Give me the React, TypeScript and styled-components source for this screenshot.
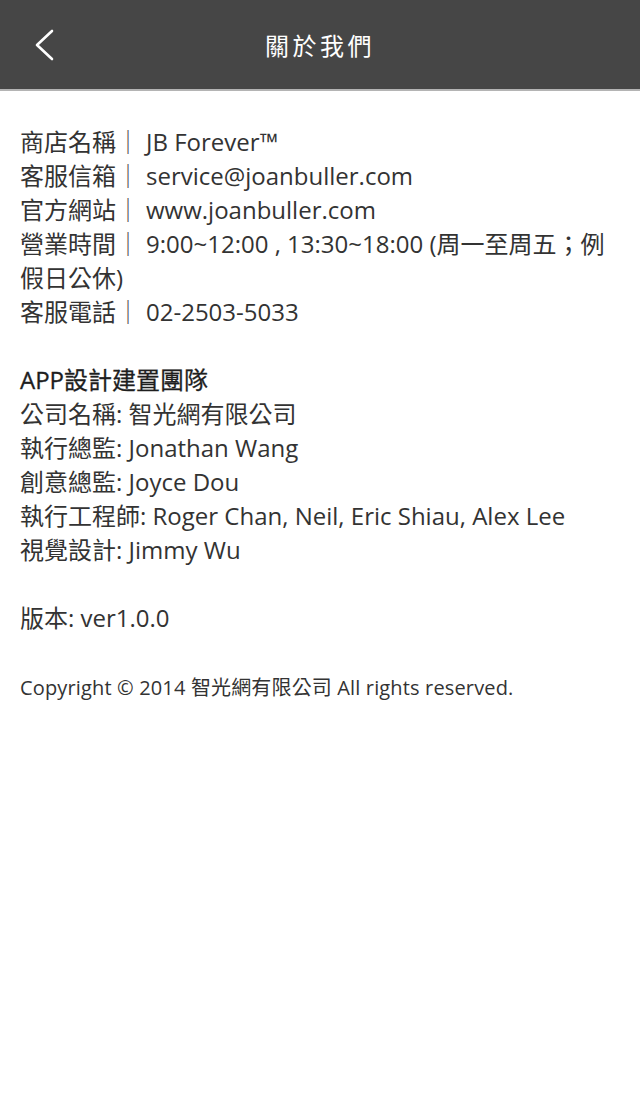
import styled, { createGlobalStyle } from "styled-components";

const GlobalStyle = createGlobalStyle`
	html, body {
		margin: 0;
		padding: 0;
		background: #fff;
	}
	body {
		font-family: "Open Sans", "Noto Sans CJK TC", sans-serif;
		color: #333;
	}
`;

const Page = styled.div`
	width: 640px;
	min-height: 1118px;
	background: #fff;
`;

const Header = styled.header`
	position: relative;
	height: 89px;
	background: #464646;
	border-bottom: 2px solid #b4b4b4;
	display: flex;
	align-items: center;
	justify-content: center;
`;

const BackButton = styled.button`
	position: absolute;
	left: 34px;
	top: 29px;
	width: 20px;
	height: 32px;
	padding: 0;
	border: none;
	background: none;
	display: block;
	cursor: pointer;
`;

const Title = styled.h1`
	margin: 0;
	font-family: "Noto Sans CJK TC", sans-serif;
	font-size: 24px;
	font-weight: 400;
	letter-spacing: 3.5px;
	color: #fff;
`;

const Content = styled.main`
	padding: 34px 20px 0;
	font-size: 24px;
	line-height: 34px;
`;

const Block = styled.section`
	margin-bottom: 34px;
`;

const Line = styled.div<{ $strong?: boolean }>`
	color: ${({ $strong }) => ($strong ? "#1e1e1e" : "#333")};
	${({ $strong }) => $strong && "-webkit-text-stroke: 0.3px #1e1e1e;"}
`;

const Sep = styled.span`
	margin-right: 6px;
	color: #555;
`;

const Copyright = styled.p`
	margin: 36px 0 0;
	font-size: 20px;
	line-height: 34px;
	letter-spacing: 0.15px;
	color: #333;
`;

const info = [
	["商店名稱", "JB Forever™"],
	["客服信箱", "service@joanbuller.com"],
	["官方網站", "www.joanbuller.com"],
	["營業時間", "9:00~12:00 , 13:30~18:00 (周一至周五；例假日公休)"],
	["客服電話", "02-2503-5033"],
];

const team = [
	["公司名稱", "智光網有限公司"],
	["執行總監", "Jonathan Wang"],
	["創意總監", "Joyce Dou"],
	["執行工程師", "Roger Chan, Neil, Eric Shiau, Alex Lee"],
	["視覺設計", "Jimmy Wu"],
];

export default function App() {
	return (
		<Page>
			<GlobalStyle />
			<Header>
				<BackButton aria-label="返回">
					<svg width="20" height="32" viewBox="0 0 20 32" fill="none">
						<path d="M18 2 L3 16 L18 30" stroke="#fff" strokeWidth="2.6" strokeLinecap="round" strokeLinejoin="round" />
					</svg>
				</BackButton>
				<Title>關於我們</Title>
			</Header>
			<Content>
				<Block>
					{info.map(([label, value]) => (
						<Line key={label}>
							{label}
							<Sep>｜</Sep>
							{value}
						</Line>
					))}
				</Block>
				<Block>
					<Line $strong>APP設計建置團隊</Line>
					{team.map(([label, value]) => (
						<Line key={label}>
							{label}: {value}
						</Line>
					))}
				</Block>
				<Line>版本: ver1.0.0</Line>
				<Copyright>Copyright © 2014 智光網有限公司 All rights reserved.</Copyright>
			</Content>
		</Page>
	);
}
